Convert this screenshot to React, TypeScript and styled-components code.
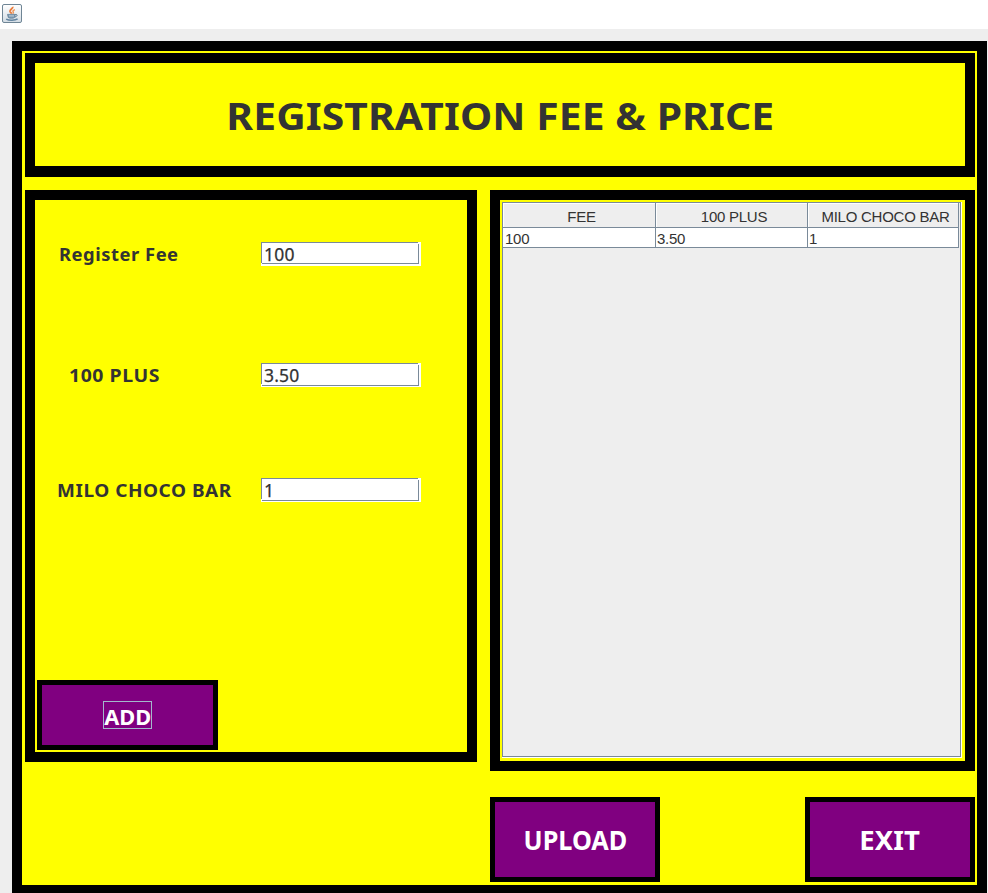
import React from "react";
import styled, { createGlobalStyle } from "styled-components";

const LINE = "#7a8a99";
const INK = "#333333";

const GlobalStyle = createGlobalStyle`
  * { box-sizing: border-box; }
  html, body { margin: 0; padding: 0; background: #eeeeee; overflow: hidden; }
  body { font-family: "Noto Sans", "DejaVu Sans", sans-serif; color: ${INK}; }
`;

const Window = styled.div`
  width: 988px;
  height: 893px;
  overflow: hidden;
  display: flex;
  flex-direction: column;
  background: #eeeeee;
`;

const TitleBar = styled.header`
  flex: none;
  height: 29px;
  padding: 3px 2px;
  background: #ffffff;
`;

const Frame = styled.main`
  flex: none;
  width: 975px;
  height: 854px;
  margin: 12px 0 0 12px;
  border: 10px solid #000000;
  background: #ffff00;
  padding: 2px 2px 3px 3px;
`;

const Banner = styled.section`
  display: flex;
  align-items: center;
  justify-content: center;
  height: 124px;
  border: 10px solid #000000;
  border-bottom-width: 11px;
`;

const Heading = styled.h1`
  margin: 0;
  font-size: 38px;
  line-height: 52px;
  font-weight: 700;
  white-space: nowrap;
  letter-spacing: 0.1px;
  transform: scaleX(1.073);
`;

const Columns = styled.div`
  display: grid;
  grid-template-columns: 452px 485px;
  column-gap: 13px;
  align-items: start;
  margin-top: 13px;
`;

const FormPanel = styled.section`
  height: 572px;
  border: 10px solid #000000;
  padding: 42px 0 2px 2px;
  display: flex;
  flex-direction: column;
`;

const FieldRow = styled.div<{ $gap: number; $indent: number }>`
  display: grid;
  grid-template-columns: 224px 160px;
  height: 24px;
  margin-bottom: ${(p) => p.$gap}px;

  label { margin-left: ${(p) => p.$indent}px; }
`;

const FieldLabel = styled.label<{ $stretch: number }>`
  font-size: 17.5px;
  line-height: 25px;
  font-weight: 700;
  white-space: nowrap;
  letter-spacing: 0.5px;
  transform: scaleX(${(p) => p.$stretch});
  transform-origin: left center;
`;

const FieldShell = styled.div`
  position: relative;
  height: 24px;
  background: #ffffff;

  /* bevel notches in the top-right and bottom-left corners */
  &::before, &::after {
    content: "";
    position: absolute;
    width: 1px;
    height: 2px;
    background: #ffffff;
  }
  &::before { top: 0; right: 2px; }
  &::after { bottom: 1px; left: 0; }
`;

const FieldInput = styled.input<{ $h: number }>`
  display: block;
  width: 158px;
  height: ${(p) => p.$h}px;
  margin: 0;
  padding: ${(p) => (p.$h === 22 ? 2 : 1)}px 0 0 2px;
  border: 1px solid ${LINE};
  border-radius: 0;
  outline: none;
  background: #ffffff;
  color: ${INK};
  font: 400 17.5px/20px "Noto Sans", sans-serif;
  letter-spacing: 0.2px;
  -webkit-text-stroke: 0.25px ${INK};
`;

const Button = styled.button<{ $w: number; $h: number; $size: number }>`
  display: flex;
  align-items: center;
  justify-content: center;
  width: ${(p) => p.$w}px;
  height: ${(p) => p.$h}px;
  padding: 0;
  border: 5px solid #000000;
  border-radius: 0;
  background: #800080;
  color: #ffffff;
  font: 700 ${(p) => p.$size}px/1.2 "Noto Sans", sans-serif;
`;

const Caption = styled.span<{ $stretch: number }>`
  padding-top: 2px;
  transform: scaleX(${(p) => p.$stretch});
`;

const AddSlot = styled.div`
  margin-top: auto;
`;

const FocusRing = styled.span`
  display: flex;
  align-items: center;
  justify-content: center;
  width: 49px;
  height: 28px;
  padding-top: 1px;
  border: 1px solid #a3b8cc;
`;

const TablePanel = styled.section`
  height: 581px;
  border: 10px solid #000000;
  padding: 2px 3px 3px 2px;
`;

const ScrollPane = styled.div`
  height: 556px;
  background: #eeeeee;
  border-right: 1px solid #ffffff;
  border-bottom: 1px solid #ffffff;
`;

const Viewport = styled.div`
  height: 555px;
  border: 1px solid ${LINE};
`;

const Table = styled.div`
  display: grid;
  grid-template-columns: 153px 152px 151px;
  font-family: "Liberation Sans", sans-serif;
  font-size: 15px;
  letter-spacing: -0.25px;
`;

const HeaderCell = styled.div`
  height: 25px;
  padding-left: 5px;
  text-align: center;
  line-height: 27px;
  border-right: 1px solid ${LINE};
  border-bottom: 1px solid ${LINE};
  box-shadow: inset 1px 1px 0 #ffffff;
  white-space: nowrap;
`;

const Cell = styled.div`
  height: 20px;
  padding-left: 2px;
  line-height: 22px;
  background: #ffffff;
  border-right: 1px solid ${LINE};
  border-bottom: 1px solid ${LINE};

  & + & { padding-left: 1px; }
`;

const Actions = styled.footer`
  display: flex;
  justify-content: space-between;
  margin: 26px 0 0 465px;
`;

const headers = ["FEE", "100 PLUS", "MILO CHOCO BAR"];
const fields = [
  { label: "Register Fee", value: "100", gap: 97, indent: 22, stretch: 1.05, height: 22 },
  { label: "100 PLUS", value: "3.50", gap: 91, indent: 32, stretch: 1.11, height: 23 },
  { label: "MILO CHOCO BAR", value: "1", gap: 0, indent: 20, stretch: 1.085, height: 23 },
];

function JavaIcon() {
  return (
    <svg width="20" height="20" viewBox="0 0 20 20" fill="none">
      <defs>
        <linearGradient id="tile" x1="0" y1="0" x2="0" y2="1">
          <stop offset="0" stopColor="#ffffff" />
          <stop offset="1" stopColor="#d3dce4" />
        </linearGradient>
      </defs>
      <rect x="0.5" y="1.5" width="19" height="18" rx="1.5" fill="url(#tile)" stroke="#6f8595" />
      <path d="M10.8 3.8c.4 2-3.3 2.5-2.8 4.7.3 1 1.5 1.3 1.7 2.3" stroke="#ea7b3b" strokeWidth="1.8" />
      <path d="M12.9 6.6c-1.8.7-2.4 1.5-1.7 2.4.4.6.2 1.1-.4 1.6" stroke="#f09557" strokeWidth="1.4" />
      <path d="M5.5 11.4h7.7l-.6 3.1c-.4 1-5.8 1-6.3 0z" fill="#7f9bb3" stroke="#587791" strokeWidth=".7" />
      <path d="M7 12.9h5" stroke="#dae3eb" strokeWidth=".7" />
      <path d="M13.2 11.6c2.7-.7 2.5 1.8-.3 2.4" stroke="#587791" />
      <path d="M4.2 16.1c2.7 1.5 9 1.5 11.4-.2" stroke="#6384a0" strokeWidth="1.6" />
    </svg>
  );
}

export default function App() {
  return (
    <>
      <GlobalStyle />
      <Window>
        <TitleBar>
          <JavaIcon />
        </TitleBar>
        <Frame>
          <Banner>
            <Heading>REGISTRATION FEE &amp; PRICE</Heading>
          </Banner>
          <Columns>
            <FormPanel>
              {fields.map((f, i) => (
                <FieldRow key={f.label} $gap={f.gap} $indent={f.indent}>
                  <FieldLabel htmlFor={`field-${i}`} $stretch={f.stretch}>{f.label}</FieldLabel>
                  <FieldShell>
                    <FieldInput id={`field-${i}`} $h={f.height} defaultValue={f.value} />
                  </FieldShell>
                </FieldRow>
              ))}
              <AddSlot>
                <Button $w={181} $h={70} $size={22}>
                  <FocusRing>
                    <Caption $stretch={0.99}>ADD</Caption>
                  </FocusRing>
                </Button>
              </AddSlot>
            </FormPanel>
            <TablePanel>
              <ScrollPane>
                <Viewport>
                  <Table>
                    {headers.map((h) => (
                      <HeaderCell key={h}>{h}</HeaderCell>
                    ))}
                    {fields.map((f) => (
                      <Cell key={f.label}>{f.value}</Cell>
                    ))}
                  </Table>
                </Viewport>
              </ScrollPane>
            </TablePanel>
          </Columns>
          <Actions>
            <Button $w={170} $h={85} $size={26}>
              <Caption $stretch={0.97}>UPLOAD</Caption>
            </Button>
            <Button $w={170} $h={85} $size={26}>
              <Caption $stretch={1.06}>EXIT</Caption>
            </Button>
          </Actions>
        </Frame>
      </Window>
    </>
  );
}
